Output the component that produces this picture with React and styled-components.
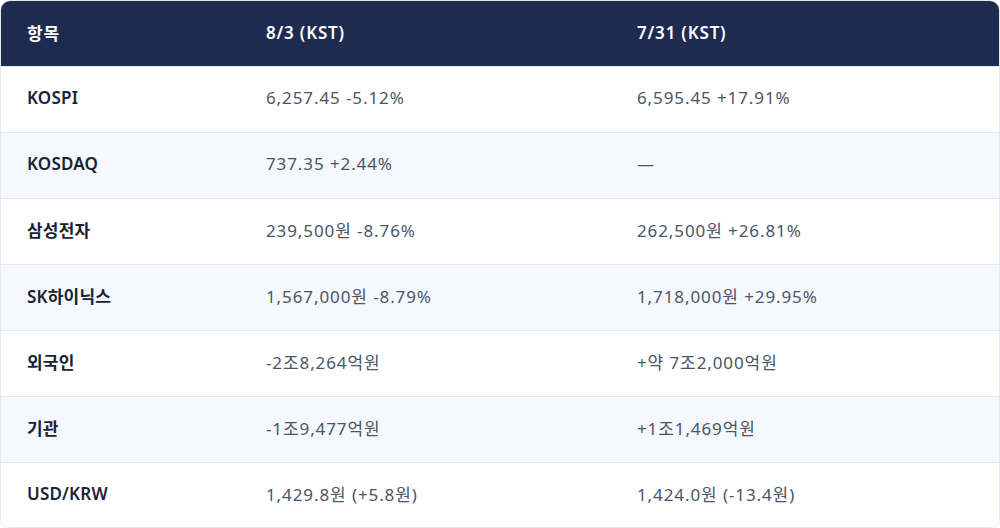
import React from 'react';
import styled, { createGlobalStyle } from 'styled-components';

const rows = [
  { label: 'KOSPI', a: '6,257.45 -5.12%', b: '6,595.45 +17.91%' },
  { label: 'KOSDAQ', a: '737.35 +2.44%', b: '—' },
  { label: '삼성전자', a: '239,500원 -8.76%', b: '262,500원 +26.81%' },
  { label: 'SK하이닉스', a: '1,567,000원 -8.79%', b: '1,718,000원 +29.95%' },
  { label: '외국인', a: '-2조8,264억원', b: '+약 7조2,000억원' },
  { label: '기관', a: '-1조9,477억원', b: '+1조1,469억원' },
  { label: 'USD/KRW', a: '1,429.8원 (+5.8원)', b: '1,424.0원 (-13.4원)' },
];

// Comparison table of market figures
const App = () => (
  <>
    <GlobalStyle />
    <Card>
      <Table>
        <colgroup>
          <col style={{ width: 239 }} />
          <col style={{ width: 371 }} />
          <col />
        </colgroup>
        <thead>
          <tr>
            <HeadCell>항목</HeadCell>
            <HeadCell>8/3 (KST)</HeadCell>
            <HeadCell>7/31 (KST)</HeadCell>
          </tr>
        </thead>
        <tbody>
          {rows.map((row, i) => (
            <Row key={row.label} $striped={i % 2 === 1}>
              <LabelCell>{row.label}</LabelCell>
              <ValueCell>{row.a}</ValueCell>
              <ValueCell>{row.b}</ValueCell>
            </Row>
          ))}
        </tbody>
      </Table>
    </Card>
  </>
);

// Styled components
const GlobalStyle = createGlobalStyle`
  html, body {
    margin: 0;
    padding: 0;
    background: #ffffff;
  }
  body {
    font-family: 'Noto Sans', 'Noto Sans CJK KR', sans-serif;
  }
`;

const Card = styled.div`
  width: 1000px;
  height: 528px;
  box-sizing: border-box;
  border: 1px solid #e2e8f0;
  border-radius: 10px;
  overflow: hidden;
`;

const Table = styled.table`
  width: 100%;
  border-collapse: separate;
  border-spacing: 0;
  table-layout: fixed;
`;

const HeadCell = styled.th`
  box-sizing: border-box;
  height: 65px;
  padding: 0 0 3px 26px;
  background: #1e2a50;
  color: #ffffff;
  font-size: 17px;
  font-weight: 600;
  letter-spacing: 0.8px;
  text-align: left;
  vertical-align: middle;
`;

const Row = styled.tr`
  background: ${(p) => (p.$striped ? '#f5f8fd' : '#ffffff')};

  td {
    height: 66px;
    border-top: 1px solid #e2e8f0;
  }
`;

const Cell = styled.td`
  box-sizing: border-box;
  padding: 0 0 4px 26px;
  font-size: 17px;
  vertical-align: middle;
  white-space: nowrap;
`;

const LabelCell = styled(Cell)`
  color: #1a2233;
  font-weight: 600;
  letter-spacing: 0.2px;
`;

const ValueCell = styled(Cell)`
  color: #4a5568;
  font-weight: 400;
  letter-spacing: 0.9px;
`;

export default App;
